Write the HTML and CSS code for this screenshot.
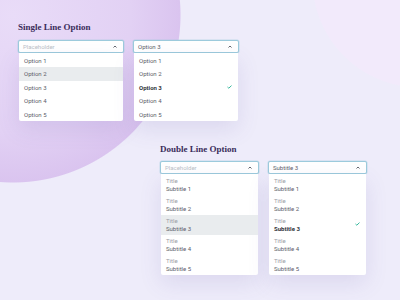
FILE: index.html
```html
<!DOCTYPE html>
<html lang="en">
<head>
    <meta charset="UTF-8" />
    <title>Dropdown Options</title>
    <link rel="stylesheet" href="styles.css">
</head>
<body>
<section class="group single">
    <h2>Single Line Option</h2>
    <div class="pair">
        <div class="dropdown">
            <div class="select placeholder">
                <span>Placeholder</span>
                <svg class="caret" width="4" height="3" viewBox="0 0 4 3"><polyline points="0.5,2.5 2,1 3.5,2.5" /></svg>
            </div>
            <ul class="menu">
                <li>Option 1</li>
                <li class="hover">Option 2</li>
                <li>Option 3</li>
                <li>Option 4</li>
                <li>Option 5</li>
            </ul>
        </div>
        <div class="dropdown">
            <div class="select">
                <span>Option 3</span>
                <svg class="caret" width="4" height="3" viewBox="0 0 4 3"><polyline points="0.5,2.5 2,1 3.5,2.5" /></svg>
            </div>
            <ul class="menu">
                <li>Option 1</li>
                <li>Option 2</li>
                <li class="selected">Option 3
                    <svg class="check" width="5" height="4" viewBox="0 0 5 4"><polyline points="0.5,2 1.8,3.2 4.5,0.6" /></svg>
                </li>
                <li>Option 4</li>
                <li>Option 5</li>
            </ul>
        </div>
    </div>
</section>

<section class="group double">
    <h2>Double Line Option</h2>
    <div class="pair">
        <div class="dropdown">
            <div class="select placeholder">
                <span>Placeholder</span>
                <svg class="caret" width="4" height="3" viewBox="0 0 4 3"><polyline points="0.5,2.5 2,1 3.5,2.5" /></svg>
            </div>
            <ul class="menu">
                <li><span class="t">Title</span><span class="s">Subtitle 1</span></li>
                <li><span class="t">Title</span><span class="s">Subtitle 2</span></li>
                <li class="hover"><span class="t">Title</span><span class="s">Subtitle 3</span></li>
                <li><span class="t">Title</span><span class="s">Subtitle 4</span></li>
                <li><span class="t">Title</span><span class="s">Subtitle 5</span></li>
            </ul>
        </div>
        <div class="dropdown">
            <div class="select">
                <span>Subtitle 3</span>
                <svg class="caret" width="4" height="3" viewBox="0 0 4 3"><polyline points="0.5,2.5 2,1 3.5,2.5" /></svg>
            </div>
            <ul class="menu">
                <li><span class="t">Title</span><span class="s">Subtitle 1</span></li>
                <li><span class="t">Title</span><span class="s">Subtitle 2</span></li>
                <li class="selected"><span class="t">Title</span><span class="s">Subtitle 3</span>
                    <svg class="check" width="5" height="4" viewBox="0 0 5 4"><polyline points="0.5,2 1.8,3.2 4.5,0.6" /></svg>
                </li>
                <li><span class="t">Title</span><span class="s">Subtitle 4</span></li>
                <li><span class="t">Title</span><span class="s">Subtitle 5</span></li>
            </ul>
        </div>
    </div>
</section>
</body>
</html>
```

FILE: styles.css
```css
html, body {
  height: 300px;
  overflow: hidden;
}
body {
  margin: 0;
  font-family: Roboto, "Liberation Sans", sans-serif;
  color: #5c606b;
  background-color: #eeecfa;
  background-image:
    radial-gradient(circle 168px at 13px 15px, #e9dcf8 0, #e2d1f4 70%, #dac4ef 167px, rgba(218, 196, 239, 0) 168px),
    radial-gradient(circle 108px at 420px -20px, #f2eafb 107px, rgba(242, 234, 251, 0) 108px);
  background-repeat: no-repeat;
}
.single {
  padding: 21px 0 0 18px;
}
.double {
  margin: 22px 0 0 160px;
}
h2 {
  margin: 0 0 7px;
  font-family: "Liberation Serif", serif;
  font-size: 9px;
  line-height: 12px;
  font-weight: bold;
  color: #3a2c5a;
}
.double h2 {
  margin-bottom: 6px;
}
.pair {
  display: flex;
  gap: 9px;
}
.single .dropdown {
  width: 106px;
}
.double .dropdown {
  width: 99px;
}
.select {
  height: 13px;
  box-sizing: border-box;
  border: 1px solid #9ccadc;
  border-radius: 2px;
  box-shadow: 0 0 0 0.5px rgba(156, 202, 220, 0.5);
  background: #ffffff;
  display: flex;
  align-items: center;
  justify-content: space-between;
  padding: 0 6px 0 4px;
  font-size: 6px;
  color: #5c606b;
}
.placeholder {
  color: #b9bdc6;
}
.caret polyline {
  fill: none;
  stroke: #4f535c;
  stroke-width: 0.9;
}
.menu {
  list-style: none;
  margin: 0 1px;
  padding: 1px 0 0;
  background: #ffffff;
  border-radius: 0 0 2px 2px;
  box-shadow: 0 8px 22px rgba(95, 75, 160, 0.13);
}
.single .menu li {
  height: 13.4px;
  line-height: 13.4px;
}
.menu li {
  font-size: 6px;
  padding: 0 6px 0 5px;
  display: flex;
  align-items: center;
  justify-content: space-between;
}
.menu li.hover {
  background: #e9ecee;
}
.menu li.selected {
  color: #30333a;
  font-weight: bold;
}
.double .menu li {
  height: 20px;
  box-sizing: border-box;
  padding: 2px 6px 2px 5px;
  flex-wrap: wrap;
  align-content: flex-start;
  position: relative;
}
.double .menu li .t,
.double .menu li .s {
  width: 100%;
  line-height: 8px;
}
.t {
  color: #9a9ea6;
  font-weight: normal;
}
.double .check {
  position: absolute;
  right: 6px;
  top: 7px;
}
.check polyline {
  fill: none;
  stroke: #35b79b;
  stroke-width: 1;
}
```
